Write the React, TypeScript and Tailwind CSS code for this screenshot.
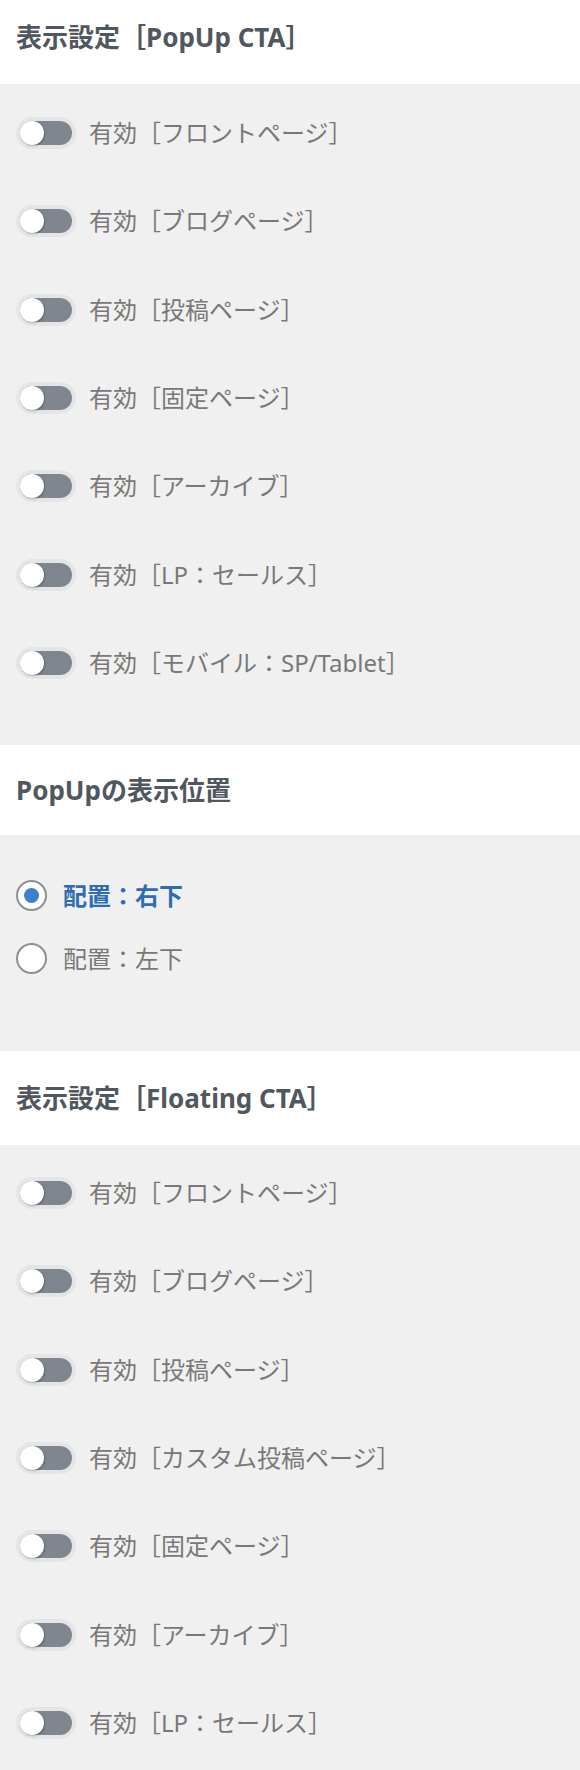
const font = { fontFamily: '"Noto Sans", "Noto Sans CJK JP", sans-serif' };

const popupItems = [
  "有効［フロントページ］",
  "有効［ブログページ］",
  "有効［投稿ページ］",
  "有効［固定ページ］",
  "有効［アーカイブ］",
  "有効［LP：セールス］",
  "有効［モバイル：SP/Tablet］",
];

const floatingItems = [
  "有効［フロントページ］",
  "有効［ブログページ］",
  "有効［投稿ページ］",
  "有効［カスタム投稿ページ］",
  "有効［固定ページ］",
  "有効［アーカイブ］",
  "有効［LP：セールス］",
];

function Heading({ children, className }: { children: React.ReactNode; className: string }) {
  return (
    <div className={`flex items-center bg-white px-[16px] ${className}`}>
      <h2 className="text-[26px] font-bold leading-none text-[#50575e]">{children}</h2>
    </div>
  );
}

function Toggle({ label }: { label: string }) {
  return (
    <label className="flex h-[24px] items-center gap-[17px]">
      <span className="ml-[20px] relative h-[24px] w-[52px] shrink-0 rounded-full bg-[#80868f] ring-4 ring-[#e4e5e7]">
        <span className="absolute left-0 top-0 h-[24px] w-[24px] rounded-full bg-white shadow-[1px_1px_2px_rgba(0,0,0,0.25)]" />
      </span>
      <span className="text-[24px] leading-none text-[#787878]">{label}</span>
    </label>
  );
}

function Radio({ label, checked }: { label: string; checked?: boolean }) {
  return (
    <label className="flex h-[31px] items-center gap-[16px] pl-[16px]">
      <span className="flex h-[31px] w-[31px] shrink-0 items-center justify-center rounded-full border-2 border-[#8c8f94] bg-white">
        {checked && <span className="h-[15px] w-[15px] rounded-full bg-[#3f7fc6]" />}
      </span>
      <span
        className={`text-[24px] leading-none ${checked ? "font-bold text-[#2f6db3]" : "text-[#787878]"}`}
      >
        {label}
      </span>
    </label>
  );
}

export default function App() {
  return (
    <div className="w-[580px] bg-[#f0f0f0]" style={font}>
      <Heading className="h-[84px] pb-[10px]">表示設定［PopUp CTA］</Heading>
      <div className="flex h-[661px] flex-col gap-[64.33px] pt-[37px]">
        {popupItems.map((t) => (
          <Toggle key={t} label={t} />
        ))}
      </div>

      <Heading className="h-[90px]">PopUpの表示位置</Heading>
      <div className="flex h-[216px] flex-col gap-[32px] pt-[45px]">
        <Radio label="配置：右下" checked />
        <Radio label="配置：左下" />
      </div>

      <Heading className="h-[94px]">表示設定［Floating CTA］</Heading>
      <div className="flex h-[625px] flex-col gap-[64.33px] pt-[36px]">
        {floatingItems.map((t) => (
          <Toggle key={t + "f"} label={t} />
        ))}
      </div>
    </div>
  );
}
